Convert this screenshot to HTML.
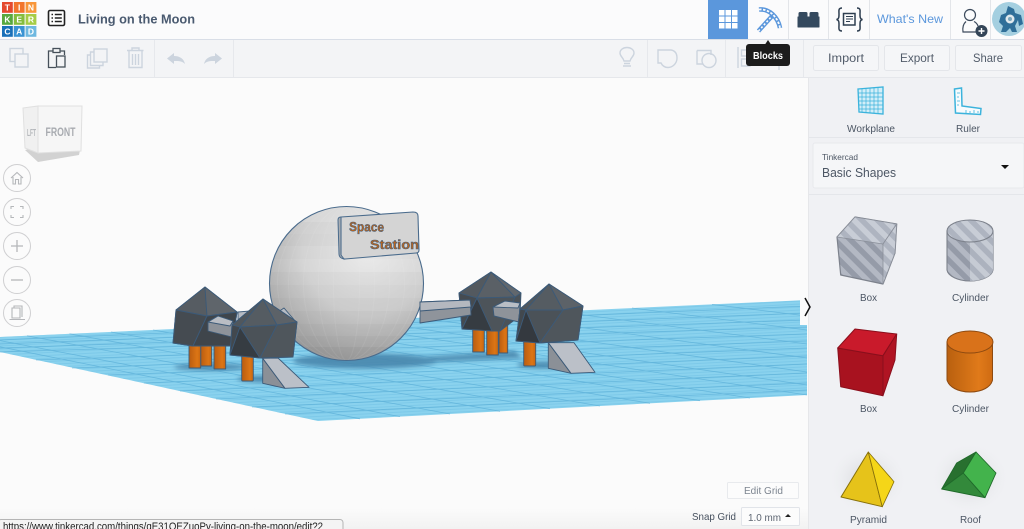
<!DOCTYPE html>
<html><head><meta charset="utf-8"><title>Living on the Moon</title>
<style>
html,body{margin:0;padding:0;background:#fbfbfb;overflow:hidden;width:1024px;height:529px}
svg{display:block;font-family:"Liberation Sans",sans-serif}
</style></head><body>
<svg width="1024" height="529" viewBox="0 0 1024 529" xmlns="http://www.w3.org/2000/svg">
<defs>
<pattern id="st" width="11" height="11" patternUnits="userSpaceOnUse" patternTransform="rotate(-45)"><rect width="11" height="11" fill="#c8cdd6"/><rect width="5.500" height="11" fill="#aeb4c0"/></pattern>
<pattern id="st2" width="11" height="11" patternUnits="userSpaceOnUse" patternTransform="rotate(-45)"><rect width="11" height="11" fill="#b3b8c3"/><rect width="5.500" height="11" fill="#959ba8"/></pattern>
<pattern id="fine" width="5" height="3" patternUnits="userSpaceOnUse" patternTransform="rotate(-3)"><rect width="5" height="1" fill="#6dbfe3" opacity=".45"/></pattern>
<radialGradient id="sph" cx=".64" cy=".28" r=".85"><stop offset="0" stop-color="#ebebeb"/><stop offset=".5" stop-color="#d6d6d6"/><stop offset="1" stop-color="#a2a2a2"/></radialGradient>
<linearGradient id="leg" x1="0" x2="1" y1="0" y2="0"><stop offset="0" stop-color="#b95c10"/><stop offset=".7" stop-color="#dc7515"/><stop offset="1" stop-color="#c8660f"/></linearGradient>
<linearGradient id="cyl" x1="0" x2="1" y1="0" y2="0"><stop offset="0" stop-color="#b9600f"/><stop offset=".7" stop-color="#e07a1a"/><stop offset="1" stop-color="#cf6b12"/></linearGradient>
<linearGradient id="bot" x1="0" x2="0" y1="0" y2="1"><stop offset="0" stop-color="#fbfbfb"/><stop offset="1" stop-color="#f2f2f2"/></linearGradient>
<clipPath id="sc"><circle cx="346.500" cy="283.500" r="77"/></clipPath>
<radialGradient id="glow"><stop offset="0" stop-color="#cfd0d3"/><stop offset="1" stop-color="#f0f1f4" stop-opacity="0"/></radialGradient>
<filter id="b2"><feGaussianBlur stdDeviation="2"/></filter>
</defs>

<rect width="1024" height="529" fill="#fbfbfb"/>
<rect y="508" width="808" height="21" fill="url(#bot)"/>

<!-- workplane -->
<polygon points="0,337 807,300 807,395 318,421 0,352" fill="#8ad2ee"/>
<polygon points="0,337 807,300 807,395 318,421 0,352" fill="url(#fine)"/>
<g stroke="#58add6" stroke-width=".8" fill="none" opacity=".7">
<path d="M0 340L807 306M0 344L807 313M0 348L807 320M0 352L807 327M36 360L807 334M72 368L807 341M108 375L807 348M144 383L807 356M180 391L807 364M216 399L807 373M252 407L807 383M285 414L807 390"/>
<path d="M360 418.800L0 346.800M400 416.600L0 340.600M450 414L27 335.800M500 411.300L69.500 333.800M550 408.700L111 332M600 406L153 330M650 403.300L194.500 328M700 400.700L234.700 326.200M750 398L275 324.400M807 395L321.700 322.300M807 385L361.600 320.400M807 372L420 317.800M807 358L487 314.700M807 344L557 311.500M807 330L632 308M807 316L712 304.400"/>
</g>
<!-- shadows -->
<g fill="#4a87ad" opacity=".9" filter="url(#b2)">
<ellipse cx="365" cy="361" rx="72" ry="7.500"/>
<ellipse cx="210" cy="367" rx="36" ry="3.500"/>
<ellipse cx="265" cy="379" rx="28" ry="3.500"/>
<path d="M425 357L515 351L522 358L430 362Z"/>
<ellipse cx="545" cy="365" rx="28" ry="3.500"/>
</g>

<!-- dome 1 behind -->
<g stroke="#3c5a78" stroke-width=".9" stroke-linejoin="round">
<rect x="200.700" y="340" width="11" height="26" fill="url(#leg)"/>
<rect x="189" y="340" width="11.700" height="28" fill="url(#leg)"/>
<rect x="214" y="340" width="11.700" height="29" fill="url(#leg)"/>
<polygon points="205,287 237,312 232,346 193,346 173,343 176,310" fill="#4c5359"/>
<polygon points="176,310 205,287 207,316" fill="#565c62"/>
<polygon points="205,287 237,312 207,316" fill="#5f656b"/>
<polygon points="176,310 207,316 193,346 173,343" fill="#454b51"/>
<polygon points="207,316 237,312 232,346 193,346" fill="#3f454b"/>
<polygon points="238,312 262,310 262,330 238,330" fill="#b5bac2"/>
<polygon points="208,322 218,316 233,321 232,337 208,331" fill="#8e939a"/>
<polygon points="208,322 218,316 233,321 230,326" fill="#b9bdc4"/>
</g>

<!-- sphere -->
<circle cx="346.500" cy="283.500" r="77" fill="url(#sph)"/>
<g clip-path="url(#sc)">
<g fill="#000">
<rect x="260" y="222" width="180" height="12" opacity=".018"/><rect x="260" y="234" width="180" height="12" opacity=".03"/><rect x="260" y="246" width="180" height="13" opacity=".012"/>
<rect x="260" y="272" width="180" height="13" opacity=".02"/><rect x="260" y="285" width="180" height="13" opacity=".035"/><rect x="260" y="298" width="180" height="13" opacity=".05"/><rect x="260" y="311" width="180" height="13" opacity=".07"/><rect x="260" y="324" width="180" height="12" opacity=".09"/><rect x="260" y="336" width="180" height="11" opacity=".11"/><rect x="260" y="347" width="180" height="15" opacity=".14"/>
</g>
<g fill="none" stroke="#fff" stroke-opacity=".07" stroke-width="1">
<ellipse cx="346.500" cy="283.500" rx="13" ry="77"/><ellipse cx="346.500" cy="283.500" rx="28" ry="77"/><ellipse cx="346.500" cy="283.500" rx="43" ry="77"/><ellipse cx="346.500" cy="283.500" rx="58" ry="77"/><ellipse cx="346.500" cy="283.500" rx="69" ry="77"/>
</g>
</g>
<circle cx="346.500" cy="283.500" r="77" fill="none" stroke="#4a6b8c" stroke-width="1.100"/>

<!-- sign -->
<path d="M341 217L413 212Q418 212 418 216L419 250Q419 253 416 253L345 259Q341 259 341 255Z" fill="#d4d4d4" stroke="#4a6b8c" stroke-width="1.100"/>
<path d="M338 220Q338 217 341 217L341 255L344 259Q339 258 339 254Z" fill="#a8adb3" stroke="#4a6b8c" stroke-width="1"/>
<g font-weight="700" font-size="13" fill="#b8651f" stroke="#3f5f80" stroke-width=".5">
<text x="349" y="231" textLength="35" lengthAdjust="spacingAndGlyphs" transform="rotate(1 349 230)">Space</text>
<text x="370" y="249" textLength="49" lengthAdjust="spacingAndGlyphs">Station</text>
</g>

<!-- dome 2 -->
<g stroke="#3c5a78" stroke-width=".9" stroke-linejoin="round">
<polygon points="278,312 284,308 296,322 284,325" fill="#b6bbc3"/>
<rect x="241.700" y="350" width="11.600" height="31" rx="1" fill="url(#leg)"/>
<polygon points="263,299 297,322 293,357 260,358 230,355 232,325" fill="#4a5157"/>
<polygon points="232,325 263,299 240,327" fill="#50575d"/>
<polygon points="263,299 277,325 240,327" fill="#555c62"/>
<polygon points="263,299 297,322 277,325" fill="#5c6268"/>
<polygon points="232,325 240,327 230,355" fill="#42484e"/>
<polygon points="240,327 260,358 230,355" fill="#363c42"/>
<polygon points="240,327 277,325 260,358" fill="#4b5258"/>
<polygon points="277,325 297,322 293,357 260,358" fill="#4f565c"/>
<polygon points="262.700,358.300 262.700,383.300 285,388.300" fill="#8b9097"/>
<polygon points="262.700,358.300 285,388.300 309,387.300 278,358" fill="#bbc0c8"/>
</g>

<!-- dome 3 + beams -->
<g stroke="#3c5a78" stroke-width=".9" stroke-linejoin="round">
<rect x="499" y="325" width="8.700" height="28" fill="url(#leg)"/>
<rect x="472.700" y="325" width="11.600" height="27" fill="url(#leg)"/>
<rect x="486.700" y="325" width="11.600" height="30" fill="url(#leg)"/>
<polygon points="491,272 521,293 520,316 500,331 462,329 459,293" fill="#4b5258"/>
<polygon points="459,293 491,272 477,298" fill="#53595f"/>
<polygon points="491,272 515,297 477,298" fill="#5a6066"/>
<polygon points="491,272 521,293 515,297" fill="#61676d"/>
<polygon points="459,293 477,298 462,329" fill="#454b51"/>
<polygon points="477,298 492,331 462,329" fill="#363c42"/>
<polygon points="477,298 515,297 500,331 492,331" fill="#4d545a"/>
<polygon points="420,302 470,300 471,315 420,323" fill="#8f949b"/>
<polygon points="420,302 470,300 471,307 420,311" fill="#b4b8bf"/>
<polygon points="493,307 505,301 520,303 519,322 494,316" fill="#8e939a"/>
<polygon points="493,307 505,301 520,303 518,308" fill="#b9bec5"/>
<!-- dome 4 -->
<rect x="523.700" y="336" width="12" height="30" rx="1" fill="url(#leg)"/>
<polygon points="549,284 583,306 578,340 540,343 516,341 520,309" fill="#4a5157"/>
<polygon points="520,309 549,284 526,310" fill="#50575d"/>
<polygon points="549,284 563,310 526,310" fill="#555c62"/>
<polygon points="549,284 583,306 563,310" fill="#5c6268"/>
<polygon points="520,309 526,310 516,341" fill="#42484e"/>
<polygon points="526,310 540,343 516,341" fill="#34393f"/>
<polygon points="526,310 563,310 540,343" fill="#4b5258"/>
<polygon points="563,310 583,306 578,340 540,343" fill="#4f565c"/>
<polygon points="548.300,342.700 548.300,368.300 571,373.300" fill="#8b9097"/>
<polygon points="548.300,342.700 571,373.300 595,372.300 574,342.700" fill="#bbc0c8"/>
</g>

<!-- view cube -->
<polygon points="25,150 38,162 79,155 80,150 40,146" fill="#d2d2d2"/>
<polygon points="23,108 38,106 38,153 25,148" fill="#f0f0f0" stroke="#e0e0e0"/>
<polygon points="38,106 82,106 81,151 38,153" fill="#f6f6f6" stroke="#e0e0e0"/>
<text x="45.500" y="136" font-size="12" font-weight="700" fill="#a8abb0" textLength="30" lengthAdjust="spacingAndGlyphs">FRONT</text>
<text x="27" y="136" font-size="10" font-weight="700" fill="#b5b8bc" textLength="9" lengthAdjust="spacingAndGlyphs">LFT</text>

<!-- nav circles -->
<g fill="#fbfbfb" stroke="#cfcfd1" stroke-width="1">
<circle cx="17" cy="178" r="13.500"/><circle cx="17" cy="212" r="13.500"/><circle cx="17" cy="246" r="13.500"/><circle cx="17" cy="280" r="13.500"/><circle cx="17" cy="313" r="13.500"/>
</g>
<g fill="none" stroke="#b5b7ba" stroke-width="1.100">
<path d="M11 178L17 172.500L23 178M13 177V184H15.500V179.500H18.500V184H21V177"/>
<path d="M11 209V206.500H14M20 206.500H23V209M23 215V217.500H20M14 217.500H11V215"/>
<path d="M11 246H23M17 240V252" stroke-width="1.300"/>
<path d="M11 280H23" stroke-width="1.300"/>
<path d="M12 308H20V318H12ZM14 308V306H22V317M9.500 319.500H25"/>
</g>

<!-- header -->
<rect width="1024" height="39" fill="#fbfbfc"/>
<rect y="39" width="1024" height="1" fill="#d9dee7"/>
<!-- logo -->
<g>
<rect x="2" y="2" width="10.800" height="10.800" fill="#e4492e"/><rect x="13.800" y="2" width="10.800" height="10.800" fill="#f2752c"/><rect x="25.600" y="2" width="10.800" height="10.800" fill="#f8963a"/>
<rect x="2" y="14" width="10.800" height="10.800" fill="#58a83f"/><rect x="13.800" y="14" width="10.800" height="10.800" fill="#84bd3e"/><rect x="25.600" y="14" width="10.800" height="10.800" fill="#a6cc46"/>
<rect x="2" y="26" width="10.800" height="10.800" fill="#1a70b8"/><rect x="13.800" y="26" width="10.800" height="10.800" fill="#3a93d3"/><rect x="25.600" y="26" width="10.800" height="10.800" fill="#6fb8e0"/>
<g fill="#fff" font-size="8.500" font-weight="700" text-anchor="middle">
<text x="7.400" y="10.500">T</text><text x="19.200" y="10.500">I</text><text x="31" y="10.500">N</text>
<text x="7.400" y="22.500">K</text><text x="19.200" y="22.500">E</text><text x="31" y="22.500">R</text>
<text x="7.400" y="34.500">C</text><text x="19.200" y="34.500">A</text><text x="31" y="34.500">D</text>
</g></g>
<!-- list icon -->
<rect x="48.500" y="10.500" width="16" height="15" rx="1.500" fill="#fff" stroke="#222" stroke-width="1.600"/>
<path d="M51.500 14.500h1.500M51.500 18h1.500M51.500 21.500h1.500M54.800 14.500h7M54.800 18h7M54.800 21.500h7" stroke="#222" stroke-width="1.500"/>
<text x="78" y="23.500" font-size="13" font-weight="700" fill="#4a5a70" textLength="117" lengthAdjust="spacingAndGlyphs">Living on the Moon</text>

<!-- top nav -->
<rect x="708" y="0" width="40" height="39" fill="#5b97dc"/>
<g fill="#fff"><rect x="719" y="10" width="5.500" height="5.500"/><rect x="725.500" y="10" width="5.500" height="5.500"/><rect x="732" y="10" width="5.500" height="5.500"/><rect x="719" y="16.500" width="5.500" height="5.500"/><rect x="725.500" y="16.500" width="5.500" height="5.500"/><rect x="732" y="16.500" width="5.500" height="5.500"/><rect x="719" y="23" width="5.500" height="5.500"/><rect x="725.500" y="23" width="5.500" height="5.500"/><rect x="732" y="23" width="5.500" height="5.500"/></g>
<!-- pickaxe -->
<path d="M758.500 31L773 15" stroke="#5b97dc" stroke-width="4.400" fill="none"/>
<path d="M758.500 31L773 15" stroke="#fbfbfc" stroke-width="1.600" stroke-dasharray="2 2" fill="none"/>
<path d="M759 9.500C769 8.500 778 17 780 28" fill="none" stroke="#5b97dc" stroke-width="4.600"/>
<path d="M759 9.500C769 8.500 778 17 780 28" fill="none" stroke="#fbfbfc" stroke-width="1.800" stroke-dasharray="2.500 1.500"/>
<path d="M798 17H799V13.500Q799 12.500 800 12.500H806Q807 12.500 807 13.500V17H810V13.500Q810 12.500 811 12.500H817Q818 12.500 818 13.500V17H819V27H798Z" fill="#34495e" stroke="#34495e" stroke-linejoin="round"/>
<g fill="none" stroke="#2e3e50" stroke-width="1.500">
<path d="M842 8C838 8 839 11 839 14C839 17 839 19 836.500 19.500C839 20 839 22 839 25C839 28 838 31 842 31"/>
<path d="M857 8C861 8 860 11 860 14C860 17 860 19 862.500 19.500C860 20 860 22 860 25C860 28 861 31 857 31"/>
<rect x="843.500" y="13.500" width="11.500" height="11.500"/>
<path d="M846 16.500H853M846 19H853M846 21.500H850" stroke-width="1"/>
</g>
<text x="877" y="23" font-size="12" fill="#5b97dc" textLength="66" lengthAdjust="spacingAndGlyphs">What's New</text>
<g stroke="#e3e5e9"><path d="M788.500 0V39M828.500 0V39M869.500 0V39M950.500 0V39M990.500 0V39"/></g>
<!-- user -->
<circle cx="970" cy="15" r="5.500" fill="none" stroke="#3c4a5c" stroke-width="1.200"/>
<path d="M976 32H963Q962 25 966 21.500M974 21.500Q977 23 978 26" fill="none" stroke="#3c4a5c" stroke-width="1.200"/>
<circle cx="981.500" cy="31" r="6" fill="#344558"/><path d="M978.500 31H984.500M981.500 28V34" stroke="#fff" stroke-width="1.400"/>
<!-- avatar -->
<circle cx="1009" cy="19" r="17" fill="#a4cfe0"/>
<path d="M1008 6L1014 9L1015 13L1021 15L1023 24L1019 26L1018 20L1015 26L1017 32H1012L1010 28L1006 32H1001L1003 26L999 22L1001 15L1006 13Z" fill="#2f6f99"/>
<circle cx="1010" cy="19" r="4.500" fill="#dfe9ee"/><circle cx="1010" cy="19" r="2" fill="#7ba7bd"/>

<!-- toolbar -->
<rect y="40" width="1024" height="37" fill="#f3f4f6"/>
<rect y="77" width="1024" height="1" fill="#e5e7eb"/>
<path d="M154.500 40V77M233.500 40V77M647.500 40V77M725.500 40V77M803.500 40V77" stroke="#e6e8ec"/>
<g fill="none" stroke="#ccd4de" stroke-width="1.400">
<rect x="10" y="48.500" width="13" height="13"/><rect x="15" y="54" width="13" height="13" fill="#f3f4f6"/>
<rect x="94" y="49" width="13" height="13"/><path d="M94 52H90.500V65.500H103V62M90.500 55H87.500V68H99.500V65.500"/>
<path d="M127 50.500H143.500M132 50.500V48H139V50.500M129 51V67.500H142V51M132.500 54V65M135.500 54V65M138.500 54V65"/>
<path d="M623 66H631M624 63.500H630M624 61C623 57 620 56.500 620 53C620 49.500 623.500 47.500 627 47.500C630.500 47.500 634 49.500 634 53C634 56.500 631 57 630 61Z"/>
<path d="M658 50H671C677 51 677 56 677 58C677 64 672 67.500 668 67.500C664 67.500 662 65 661 63H658Z"/>
<path d="M697 50.500H711V55M697 50.500V64H703"/><circle cx="709" cy="60.500" r="7"/>
<path d="M738 47V68M741.500 50H748V56H741.500ZM741.500 59H750V66H741.500Z"/>
<path d="M779 50L785 64H773ZM779 64V70"/>
</g>
<g fill="#ccd4de"><path d="M167 58.500L174 53V56C180 56 184 59 185 64C182 61 179 61 174 61V64Z"/><path d="M222 58.500L215 53V56C209 56 205 59 204 64C207 61 210 61 215 61V64Z"/></g>
<g fill="none" stroke="#46505a" stroke-width="1.300">
<path d="M53 51H48.500V67.500H56M60 51H64.500V55"/><rect x="53" y="48.500" width="7" height="4" fill="#f3f4f6"/><rect x="56.500" y="56" width="8.500" height="11" fill="#f3f4f6"/>
</g>
<!-- tooltip -->
<path d="M768 40L771 44.500H765Z" fill="#1c1c1c"/>
<rect x="746" y="44" width="44" height="22" rx="3" fill="#1c1c1c"/>
<text x="753" y="59" font-size="10" font-weight="700" fill="#fff" textLength="30" lengthAdjust="spacingAndGlyphs">Blocks</text>
<!-- buttons -->
<g fill="#f5f6f8" stroke="#e4e6ea"><rect x="813.500" y="45.500" width="65" height="25" rx="2"/><rect x="884.500" y="45.500" width="65" height="25" rx="2"/><rect x="955.500" y="45.500" width="66" height="25" rx="2"/></g>
<g font-size="12" fill="#525c6a"><text x="828" y="62" textLength="36" lengthAdjust="spacingAndGlyphs">Import</text><text x="900" y="62" textLength="34" lengthAdjust="spacingAndGlyphs">Export</text><text x="973" y="62" textLength="30" lengthAdjust="spacingAndGlyphs">Share</text></g>

<!-- sidebar -->
<rect x="808" y="78" width="216" height="451" fill="#f0f1f4"/>
<rect x="808" y="78" width="1" height="451" fill="#e6e7ea"/>
<rect x="809" y="137" width="215" height="1" fill="#e4e6ea"/>
<rect x="813" y="143" width="211" height="45" rx="2" fill="#f5f6f8" stroke="#e8e9ed"/>
<rect x="809" y="194" width="215" height="1" fill="#e4e6ea"/>
<!-- workplane icon -->
<polygon points="858,89 883,87 883,114 859,112" fill="#d3eef8" stroke="#3bb3dc" stroke-width="1.300"/>
<path d="M862 89V112M866 89V113M870 88V113M874 88V113M878 88V114M858 93H883M858 97H883M858 101H883M859 105H883M859 109H883" stroke="#3bb3dc" stroke-width=".7"/>
<!-- ruler -->
<path d="M954.500 89L961.500 88L962 106L981 108.500L980.500 114.500L955.500 113Z" fill="#f7fbfd" stroke="#3bb3dc" stroke-width="1.500"/>
<path d="M957 93h3M957 97h2M957 101h3M957 105h2M966 113v-3M970 113v-2M974 113v-3M978 113v-2" stroke="#3bb3dc" stroke-width=".8"/>
<g font-size="10.500" fill="#4c5664">
<text x="847" y="132" textLength="48" lengthAdjust="spacingAndGlyphs">Workplane</text>
<text x="956" y="132" textLength="24" lengthAdjust="spacingAndGlyphs">Ruler</text>
<text x="822" y="160" font-size="8.500" textLength="36" lengthAdjust="spacingAndGlyphs">Tinkercad</text>
<text x="822" y="177" font-size="13" textLength="74" lengthAdjust="spacingAndGlyphs">Basic Shapes</text>
<text x="860" y="301" textLength="17" lengthAdjust="spacingAndGlyphs">Box</text>
<text x="952" y="301" textLength="37" lengthAdjust="spacingAndGlyphs">Cylinder</text>
<text x="860" y="412" textLength="17" lengthAdjust="spacingAndGlyphs">Box</text>
<text x="952" y="412" textLength="37" lengthAdjust="spacingAndGlyphs">Cylinder</text>
<text x="850" y="523" textLength="37" lengthAdjust="spacingAndGlyphs">Pyramid</text>
<text x="960" y="523" textLength="21" lengthAdjust="spacingAndGlyphs">Roof</text>
</g>
<path d="M1001 165H1009L1005 169Z" fill="#111"/>
<!-- collapse tab -->
<rect x="800" y="288" width="8" height="37" fill="#fbfbfb"/>
<path d="M805 298L810 307L805 316" fill="none" stroke="#111" stroke-width="1.500"/>

<!-- gray box -->
<g stroke-linejoin="round">
<polygon points="855,217 896.700,224 895,253 883,284 840.700,275 837,237" fill="url(#st2)" stroke="#7d828c" stroke-width="1.200"/>
<polygon points="855,217 896.700,224 883,244 837,237" fill="url(#st)" stroke="#8a8f99" stroke-width=".8"/>
<polygon points="883,244 896.700,224 895,253 883,284" fill="url(#st)" stroke="#8a8f99" stroke-width=".8"/>
</g>
<!-- gray cylinder -->
<path d="M947 231V270C948 276 958 281 970 281C982 281 992 276 993 270V231Z" fill="url(#st2)" stroke="#7d828c" stroke-width="1.100"/>
<path d="M970 242V281C982 281 992 276 993 270V231Z" fill="url(#st)" opacity=".9"/>
<ellipse cx="970" cy="231" rx="23" ry="11" fill="url(#st)" stroke="#7d828c" stroke-width="1.100"/>
<!-- red box -->
<g stroke="#8a0f1c" stroke-linejoin="round" stroke-width="1">
<polygon points="837.700,348 883,355.700 883,395.700 840.700,386.700" fill="#a8121f"/>
<polygon points="855,329 896.700,334 883,355.700 837.700,348" fill="#c91a2b"/>
<polygon points="883,355.700 896.700,334 895,360 883,395.700" fill="#b01423"/>
</g>
<!-- orange cylinder -->
<path d="M947 342V380C949 387 958 392 970 392C982 392 991 387 992.500 380V342Z" fill="url(#cyl)" stroke="#8e4a10"/>
<ellipse cx="970" cy="342" rx="23" ry="11" fill="#d9721a" stroke="#8e4a10"/>
<!-- pyramid -->
<ellipse cx="868" cy="480" rx="40" ry="36" fill="url(#glow)"/>
<g stroke="#87700a" stroke-linejoin="round">
<polygon points="868.300,452 841,497 882.300,506.700" fill="#e6c31a"/>
<polygon points="868.300,452 882.300,506.700 894,481.700" fill="#f5d618" stroke-width=".8"/>
</g>
<!-- roof -->
<ellipse cx="970" cy="478" rx="40" ry="36" fill="url(#glow)"/>
<g stroke="#1f6a2a" stroke-linejoin="round" stroke-width=".9">
<polygon points="976,452 956.700,463 941.700,489 963.300,473" fill="#28702f"/>
<polygon points="941.700,489 963.300,473 985,497.700" fill="#33893b"/>
<polygon points="976,452 996,473 985,497.700 963.300,473" fill="#43b34c"/>
</g>

<!-- bottom controls -->
<rect x="727.500" y="482.500" width="71" height="16" rx="1" fill="#fcfcfc" stroke="#e8eaed"/>
<text x="744" y="494" font-size="10.500" fill="#7d8590" textLength="39" lengthAdjust="spacingAndGlyphs">Edit Grid</text>
<text x="692" y="520" font-size="10.500" fill="#46505e" textLength="44" lengthAdjust="spacingAndGlyphs">Snap Grid</text>
<rect x="741.500" y="507.500" width="58" height="18" rx="1" fill="#fcfcfc" stroke="#e1e4e9"/>
<text x="748" y="521" font-size="10.500" fill="#5e6672" textLength="33" lengthAdjust="spacingAndGlyphs">1.0 mm</text>
<path d="M785 517H791L788 514Z" fill="#222"/>

<!-- status bubble -->
<rect x="-2" y="519.500" width="345" height="14" rx="3" fill="#f4f4f4" stroke="#b5b5b5"/>
<text x="3" y="530" font-size="11" fill="#222" textLength="320" lengthAdjust="spacingAndGlyphs">https://www.tinkercad.com/things/qE31QEZuoPy-living-on-the-moon/edit?2</text>
</svg>
</body></html>
